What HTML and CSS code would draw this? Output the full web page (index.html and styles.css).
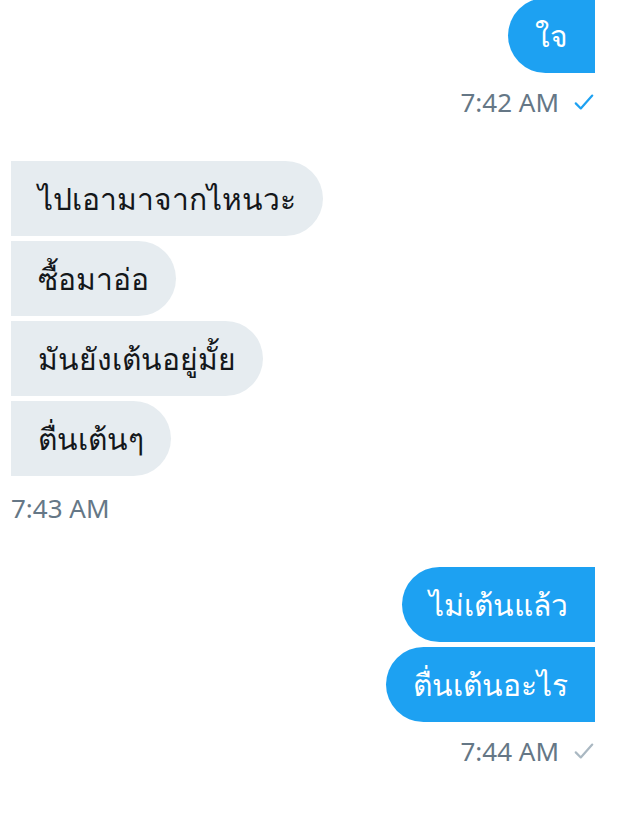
FILE: index.html
```html
<!DOCTYPE html>
<html lang="th">
<head>
<meta charset="UTF-8">
<meta name="viewport" content="width=device-width, initial-scale=1.0">
<title>ข้อความ</title>
<link rel="stylesheet" href="styles.css">
</head>
<body>

<div class="chat">
    <div class="group sent first">
        <div class="bubble">ใจ</div>
        <div class="meta">
            <span>7:42 AM</span>
            <svg class="check read" viewBox="0 0 24 24"><path d="M3 13.5l5.5 5.5L21 5" /></svg>
        </div>
    </div>

    <div class="group received">
        <div class="bubble">ไปเอามาจากไหนวะ</div>
        <div class="bubble">ซื้อมาอ่อ</div>
        <div class="bubble">มันยังเต้นอยู่มั้ย</div>
        <div class="bubble">ตื่นเต้นๆ</div>
        <div class="meta"><span>7:43 AM</span></div>
    </div>

    <div class="group sent">
        <div class="bubble">ไม่เต้นแล้ว</div>
        <div class="bubble">ตื่นเต้นอะไร</div>
        <div class="meta">
            <span>7:44 AM</span>
            <svg class="check" viewBox="0 0 24 24"><path d="M3 13.5l5.5 5.5L21 5" /></svg>
        </div>
    </div>
</div>

</body>
</html>
```

FILE: styles.css
```css
body {
    margin: 0;
    padding: 0;
    background-color: #ffffff;
    font-family: "Noto Sans", "DejaVu Sans", sans-serif;
}

.chat {
    display: flex;
    flex-direction: column;
    gap: 44px;
    padding: 0 23px 0 11px;
}

.group {
    display: flex;
    flex-direction: column;
    gap: 5px;
}

.group.sent {
    align-items: flex-end;
}

.group.received {
    align-items: flex-start;
}

/* the first bubble is cut by the top of the screen */
.group.first {
    margin-top: -2px;
}

.bubble {
    font-size: 30px;
    line-height: 45px;
    padding: 15px 27px;
}

.sent .bubble {
    background-color: #1da1f2;
    color: #ffffff;
    border-radius: 38px 0 0 38px;
}

.received .bubble {
    background-color: #e6ecf0;
    color: #14171a;
    border-radius: 0 38px 38px 0;
}

.meta {
    display: flex;
    align-items: center;
    gap: 14px;
    margin-top: 9px;
    font-size: 26px;
    line-height: 30px;
    color: #657786;
}

.received .meta {
    margin-top: 12px;
}

.check {
    width: 22px;
    height: 22px;
    fill: none;
    stroke: #aab8c2;
    stroke-width: 2.4;
    stroke-linecap: round;
    stroke-linejoin: round;
}

.check.read {
    stroke: #1da1f2;
}
```
